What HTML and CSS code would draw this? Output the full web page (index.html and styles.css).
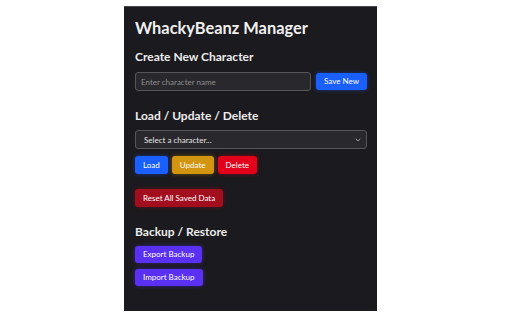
FILE: index.html
```html
<!DOCTYPE html>
<html>
<head>
<meta charset="utf-8">
<link rel="stylesheet" href="styles.css">
</head>
<body>
<div class="panel">
  <h1 class="title">WhackyBeanz Manager</h1>

  <h2 class="section">Create New Character</h2>
  <div class="row">
    <input class="field" type="text" placeholder="Enter character name">
    <button class="btn blue">Save New</button>
  </div>

  <h2 class="section sp">Load / Update / Delete</h2>
  <div class="select">
    <span>Select a character...</span>
    <svg class="chev" width="6" height="4" viewBox="0 0 6 4"><path d="M0.8 0.8 L3 3 L5.2 0.8" fill="none" stroke="#9a9a9a" stroke-width="1"/></svg>
  </div>
  <div class="btns">
    <button class="btn blue">Load</button>
    <button class="btn amber">Update</button>
    <button class="btn red">Delete</button>
  </div>
  <div class="reset-row">
    <button class="btn darkred">Reset All Saved Data</button>
  </div>

  <h2 class="section sp">Backup / Restore</h2>
  <div class="stack">
    <button class="btn purple">Export Backup</button>
    <button class="btn purple">Import Backup</button>
  </div>
</div>
</body>
</html>
```
FILE: styles.css
```css
html, body {
  margin: 0;
  padding: 0;
  background: #ffffff;
}
body {
  font-family: "Lato", "Open Sans", sans-serif;
}
.panel {
  box-sizing: border-box;
  margin: 6px 0 0 124px;
  width: 253px;
  height: 305px;
  background: #1b1a1e;
  border-top: 1px solid #4a4a4c;
  padding: 11px 10px 0 11px;
  color: #ececec;
}
.title {
  margin: 0;
  font-size: 16.4px;
  line-height: 20px;
  font-weight: 700;
  color: #f0f0f0;
}
.section {
  margin: 11px 0 7px 0;
  font-size: 12px;
  line-height: 16px;
  font-weight: 700;
  color: #ececec;
}
.section.sp {
  margin-top: 17px;
  margin-bottom: 6px;
}
.row {
  display: flex;
  gap: 5px;
  align-items: center;
}
.field {
  box-sizing: border-box;
  width: 176px;
  height: 19px;
  margin: 0;
  padding: 0 5px;
  background: #29282c;
  border: 1px solid #55555a;
  border-radius: 3px;
  color: #ddd;
  font-family: inherit;
  font-size: 8px;
  outline: none;
}
.field::placeholder {
  color: #8d8d90;
}
.btn {
  box-sizing: border-box;
  height: 18px;
  margin: 0;
  padding: 0 8px;
  border: none;
  border-radius: 3px;
  color: #fff;
  font-family: inherit;
  font-size: 8px;
  line-height: 18px;
  white-space: nowrap;
}
.row .btn { height: 17px; line-height: 17px; }
.blue { background: #1a5fff; box-shadow: 0 0 4px rgba(26, 95, 255, 0.45); }
.amber { background: #d3940f; box-shadow: 0 0 4px rgba(211, 148, 15, 0.45); }
.red { background: #e2001a; box-shadow: 0 0 4px rgba(226, 0, 26, 0.45); }
.darkred { background: #a30e1f; box-shadow: 0 0 4px rgba(163, 14, 31, 0.45); }
.purple { background: #5a30f2; box-shadow: 0 0 4px rgba(90, 48, 242, 0.5); height: 17px; line-height: 17px; }
.select {
  box-sizing: border-box;
  width: 232px;
  height: 19px;
  display: flex;
  align-items: center;
  justify-content: space-between;
  padding: 0 5px 0 8px;
  background: #29282c;
  border: 1px solid #55555a;
  border-radius: 3px;
  font-size: 8px;
  color: #e6e6e6;
}
.btns {
  display: flex;
  gap: 4px;
  margin-top: 7px;
}
.reset-row {
  display: flex;
  margin-top: 15px;
}
.stack {
  display: flex;
  flex-direction: column;
  align-items: flex-start;
  gap: 6px;
}
```
